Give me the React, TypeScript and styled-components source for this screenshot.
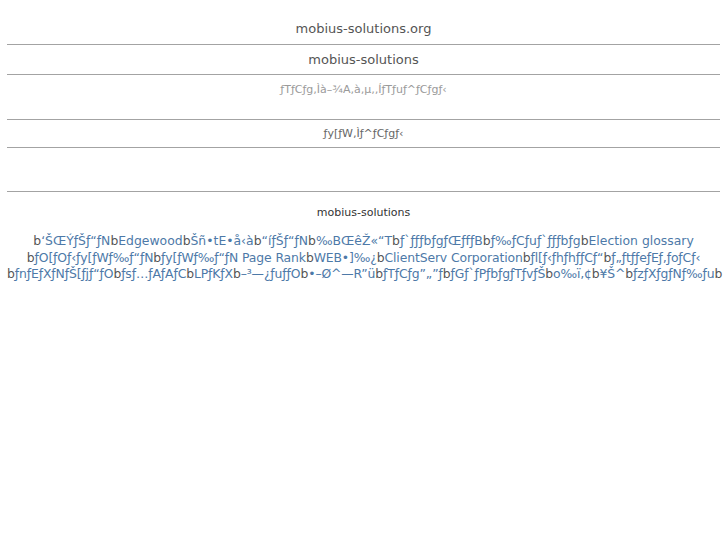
import React from 'react'
import styled, { createGlobalStyle } from 'styled-components'

const GlobalStyle = createGlobalStyle`
  html, body {
    margin: 0;
    padding: 0;
    background: #ffffff;
  }
  body {
    font-family: "DejaVu Sans", "Noto Sans CJK JP", sans-serif;
  }
`

const Page = styled.div`
  padding: 0 7px;
`

const Rule = styled.div`
  height: 1px;
  background: #a3a3a3;
`

const SiteName = styled.h1`
  margin: 0;
  padding-top: 14px;
  font-size: 13px;
  font-weight: normal;
  line-height: 30px;
  color: #555555;
  text-align: center;
`

const SiteTitle = styled.h2`
  margin: 0;
  font-size: 13px;
  font-weight: normal;
  line-height: 29px;
  color: #555555;
  text-align: center;
`

const Description = styled.p`
  margin: 0;
  padding: 7px 0 21px;
  font-size: 11px;
  line-height: 16px;
  color: #9a9a9a;
  text-align: center;
`

const PageTitle = styled.h3`
  margin: 0;
  font-size: 11px;
  font-weight: normal;
  line-height: 27px;
  color: #666666;
  text-align: center;
`

const Blank = styled.div`
  height: 43px;
`

const Footer = styled.footer`
  padding-top: 14px;
  text-align: center;
`

const FooterTitle = styled.div`
  font-size: 11px;
  line-height: 14px;
  color: #333333;
  margin-bottom: 13px;
`

const LinkLine = styled.div<{ $tight?: boolean }>`
  font-size: 12.4px;
  line-height: 16.5px;
  letter-spacing: ${(p) => (p.$tight ? '-0.12px' : '0')};
  white-space: nowrap;
  text-align: center;
`

const Sep = styled.span`
  color: #555555;
`

const LinkItem = styled.a`
  color: #4d79a8;
  text-decoration: none;
`

const lines: { items: string[]; trailing?: boolean; tight?: boolean }[] = [
  {
    items: [
      '‘ŠŒÝƒŠƒ“ƒN',
      'Edgewood',
      'Šñ•tE•å‹à',
      '“íƒŠƒ“ƒN',
      '‰BŒêŽ«“T',
      'ƒ`ƒƒƒbƒgƒŒƒfƒB',
      'ƒ‰ƒCƒuƒ`ƒƒƒbƒg',
      'Election glossary',
    ],
  },
  {
    items: [
      'ƒO[ƒOƒ‹ƒy[ƒWƒ‰ƒ“ƒN',
      'ƒy[ƒWƒ‰ƒ“ƒN Page Rank',
      'WEB•]‰¿',
      'ClientServ Corporation',
      'ƒl[ƒ‹ƒhƒhƒƒCƒ“',
      'ƒ„ƒtƒƒeƒEƒ‚ƒoƒCƒ‹',
    ],
    tight: true,
  },
  {
    items: [
      'ƒnƒEƒXƒNƒŠ[ƒjƒ“ƒO',
      'ƒsƒ…ƒAƒAƒC',
      'LPƒKƒX',
      '–³—¿ƒuƒƒO',
      '•–Ø^—R”ü',
      'ƒTƒCƒg”„”ƒ',
      'ƒGƒ`ƒPƒbƒgƒTƒvƒŠ',
      'o‰ï‚¢',
      '¥Š^',
      'ƒzƒXƒgƒNƒ‰ƒu',
    ],
    trailing: true,
    tight: true,
  },
]

export default function App() {
  return (
    <>
      <GlobalStyle />
      <Page>
        <SiteName>mobius-solutions.org</SiteName>
        <Rule />
        <SiteTitle>mobius-solutions</SiteTitle>
        <Rule />
        <Description>ƒTƒCƒg‚Ìà–¾A‚à‚µ‚­‚ÍƒTƒuƒ^ƒCƒgƒ‹</Description>
        <Rule />
        <PageTitle>ƒy[ƒW‚Ìƒ^ƒCƒgƒ‹</PageTitle>
        <Rule />
        <Blank />
        <Rule />
        <Footer>
          <FooterTitle>mobius-solutions</FooterTitle>
          {lines.map((line, i) => (
            <LinkLine key={i} $tight={line.tight}>
              {line.items.map((item, j) => (
                <React.Fragment key={j}>
                  <Sep>b</Sep>
                  <LinkItem href="#">{item}</LinkItem>
                </React.Fragment>
              ))}
              {line.trailing && <Sep>b</Sep>}
            </LinkLine>
          ))}
        </Footer>
      </Page>
    </>
  )
}
